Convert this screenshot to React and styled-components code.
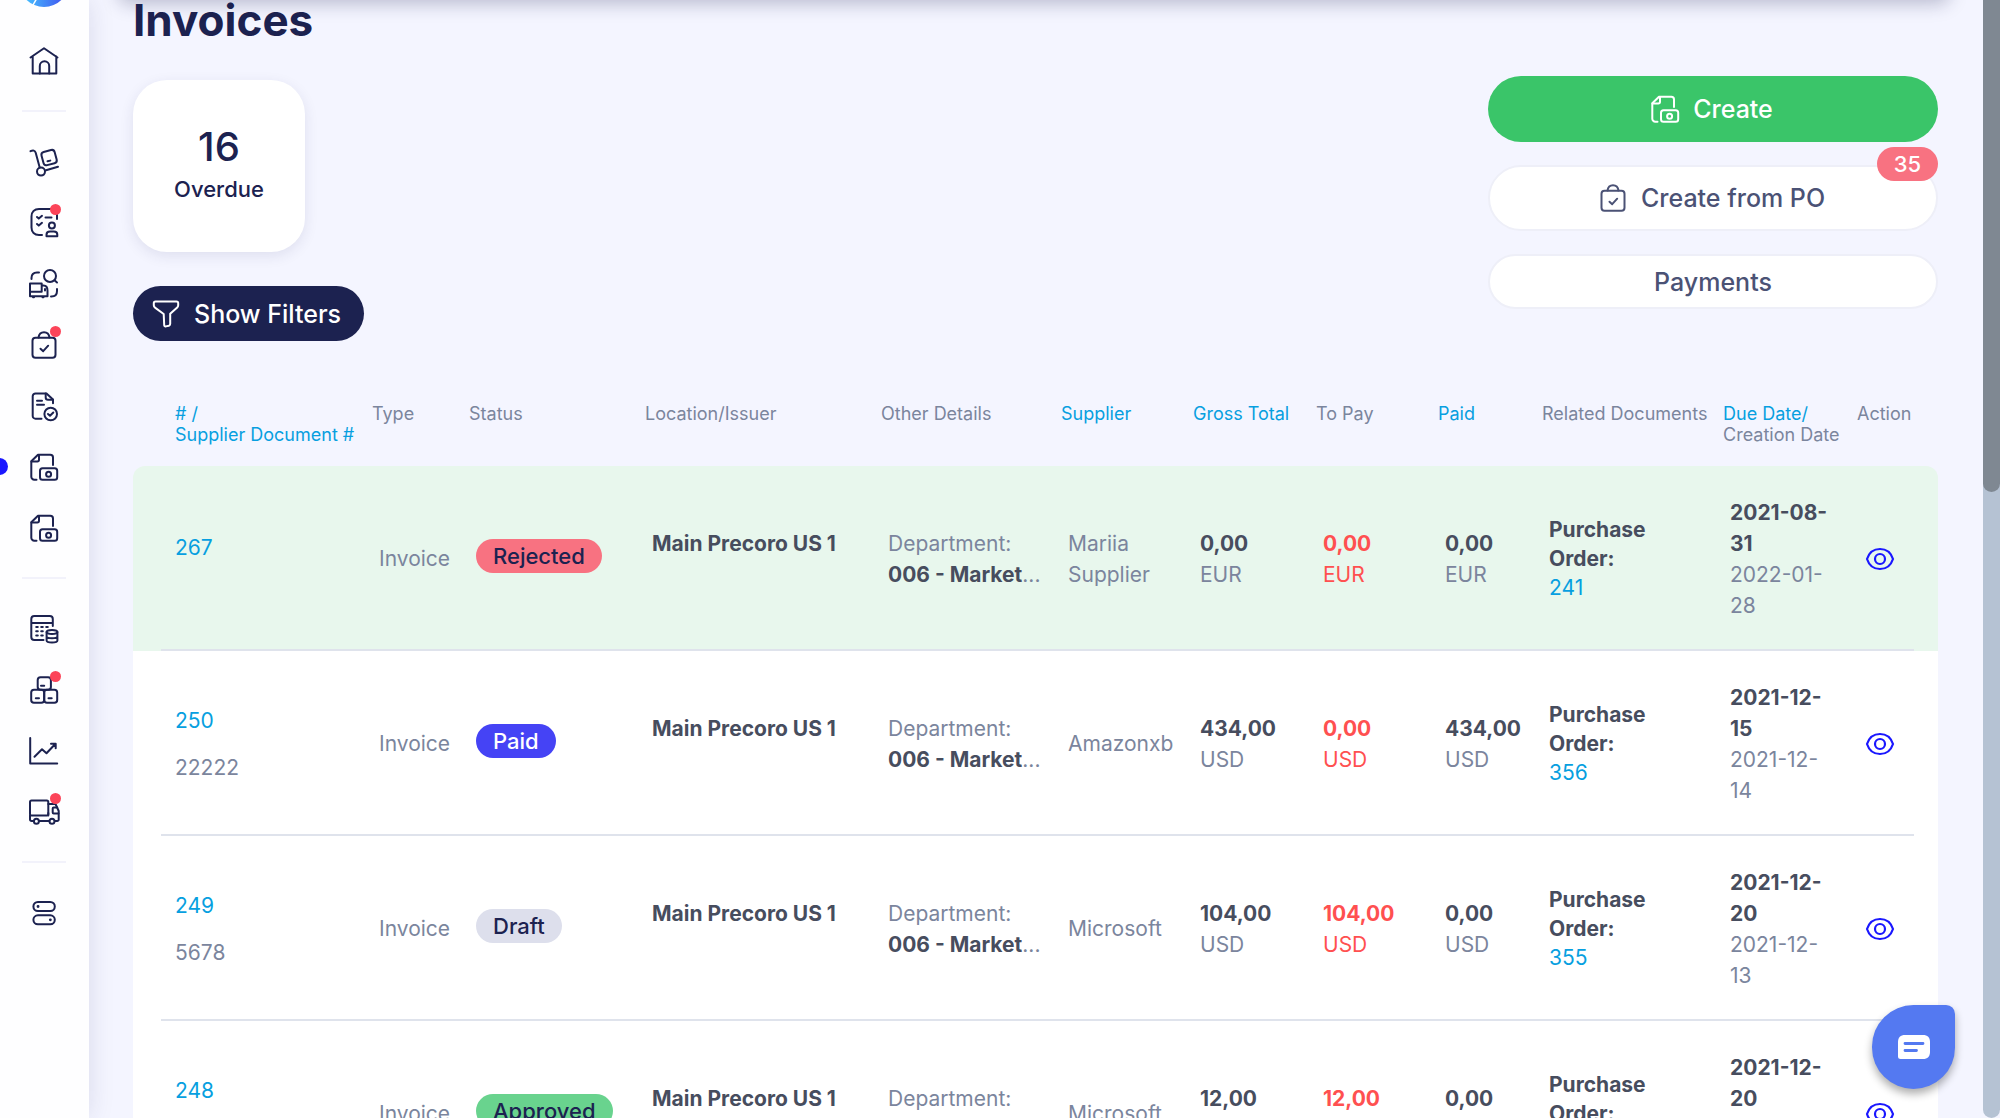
import React from 'react'
import styled, { createGlobalStyle } from 'styled-components'

const colors = {
    ink: '#1c2250',
    slate: '#4b5275',
    text: '#474d5e',
    muted: '#7b859d',
    link: '#079fe0',
    red: '#ff5050',
    page: '#f4f5ff',
    line: '#dfe3ec',
    green: '#3ac569',
    rose: '#f87281'
}

const GlobalStyle = createGlobalStyle`
  * {
    box-sizing: border-box;
  }

  body {
    margin: 0;
    background: ${colors.page};
    color: ${colors.ink};
    font-family: Inter, "Liberation Sans", sans-serif;
  }

  a {
    text-decoration: none;
  }

  button {
    font-family: inherit;
    cursor: pointer;
  }
`

const Shell = styled.div`
  position: relative;
  display: flex;
  height: 100vh;
  overflow: hidden;
`

const Sidebar = styled.nav`
  flex: 0 0 89px;
  display: flex;
  flex-direction: column;
  align-items: center;
  padding-right: 1px;
  background: #fefeff;
  box-shadow: 0 0 24px rgba(40, 40, 100, 0.13);
`

const Logo = styled.a`
  height: 50px;
  margin: -43px 0 23px;
`

const NavLink = styled.a`
  position: relative;
  display: flex;
  align-items: center;
  justify-content: center;
  width: 100%;
  height: 61px;
  color: ${colors.ink};

  &[aria-current='page']::before {
    content: '';
    position: absolute;
    left: -9px;
    width: 17px;
    height: 17px;
    border-radius: 50%;
    background: #1a17ff;
  }
`

const IconHolder = styled.span`
  position: relative;
  display: flex;
`

const AlertDot = styled.span`
  position: absolute;
  top: -3px;
  right: -1px;
  width: 11px;
  height: 11px;
  border-radius: 50%;
  background: #fc4459;
`

const NavDivider = styled.hr`
  width: 44px;
  height: 2px;
  margin: 19px 0;
  border: 0;
  background: #f2f2fb;
`

const TopShade = styled.div`
  position: absolute;
  top: -60px;
  left: 118px;
  right: 50px;
  height: 60px;
  border-radius: 12px;
  box-shadow: 0 4px 18px rgba(28, 34, 80, 0.27);
`

const Main = styled.main`
  flex: 1;
  min-width: 0;
  padding: 0 62px 0 44px;
`

const Title = styled.h1`
  margin: 0;
  font-size: 44px;
  line-height: 40px;
  font-weight: 700;
`

const TopBar = styled.div`
  display: flex;
  justify-content: space-between;
  align-items: flex-start;
  margin-top: 36px;
`

const Summary = styled.div`
  display: flex;
  flex-direction: column;
  align-items: flex-start;
  gap: 34px;
  padding-top: 4px;
`

const StatCard = styled.a`
  display: flex;
  flex-direction: column;
  align-items: center;
  justify-content: center;
  width: 172px;
  height: 172px;
  padding-bottom: 4px;
  border-radius: 34px;
  background: #fff;
  color: ${colors.ink};
  box-shadow: 0 4px 14px rgba(40, 40, 100, 0.1);
`

const StatValue = styled.span`
  font-size: 40px;
  line-height: 50px;
  font-weight: 500;
`

const StatLabel = styled.span`
  font-size: 22px;
  line-height: 34px;
  font-weight: 500;
`

const FilterButton = styled.button`
  display: flex;
  align-items: center;
  gap: 12px;
  height: 55px;
  padding: 0 23px 0 17px;
  border: 0;
  border-radius: 28px;
  background: ${colors.ink};
  color: #fff;
  font-size: 25px;
  font-weight: 500;
`

const Actions = styled.div`
  display: flex;
  flex-direction: column;
  gap: 23px;
  width: 450px;
`

const ActionButton = styled.button`
  position: relative;
  display: flex;
  align-items: center;
  justify-content: center;
  gap: 12px;
  width: 100%;
  height: ${props => (props.$compact ? '55px' : '66px')};
  padding: ${props => (props.$compact ? '0' : '0 4px 0 0')};
  border: ${props => (props.$primary ? '0' : '2px solid #eeeff8')};
  border-radius: 33px;
  background: ${props => (props.$primary ? colors.green : '#fff')};
  color: ${props => (props.$primary ? '#fff' : colors.slate)};
  font-size: 25px;
  font-weight: 500;
`

const CountBadge = styled.span`
  position: absolute;
  top: -20px;
  right: -2px;
  width: 61px;
  border-radius: 17px;
  background: ${colors.rose};
  color: #fff;
  font-size: 22px;
  line-height: 34px;
  text-align: center;
`

const Table = styled.table`
  width: 100%;
  margin-top: 36px;
  table-layout: fixed;
  border-collapse: collapse;
  font-size: 21px;
  line-height: 31px;
  color: ${colors.muted};
`

const HeadCell = styled.th`
  padding: 26px 0 21px;
  font-size: 18px;
  line-height: 21px;
  font-weight: 400;
  text-align: left;
  vertical-align: top;
  white-space: nowrap;

  &:first-child {
    padding-left: 42px;
  }
`

const SortLink = styled.a`
  color: ${colors.link};
`

const Row = styled.tr`
  height: 185px;
  background:
    linear-gradient(${colors.line}, ${colors.line}) 28px 100% / calc(100% - 52px) 2px no-repeat,
    ${props => (props.$highlight ? '#e8f7ed' : '#fff')};
`

const Cell = styled.td`
  padding: 0 22px 0 7px;
  vertical-align: middle;
  color: ${props => (props.$due ? colors.red : 'inherit')};

  &:first-child {
    padding-left: 42px;
  }
`

const Body = styled.tbody`
  clip-path: inset(0 round 12px 12px 0 0);
`

const DocLink = styled.a`
  display: block;
  color: ${colors.link};
`

const DocNumber = styled.div`
  min-height: 23px;
  padding-top: 16px;
`

const Strong = styled.strong`
  font-weight: 700;
  color: ${props => (props.$due ? 'inherit' : colors.text)};
`

const Location = styled.div`
  height: 62px;
  white-space: nowrap;
`

const NoWrap = styled.div`
  white-space: nowrap;
`

const Related = styled.div`
  line-height: 29px;
`

const tones = {
    Rejected: { background: colors.rose, color: colors.ink },
    Paid: { background: '#4543f5', color: '#fff' },
    Draft: { background: '#dddfec', color: colors.ink },
    Approved: { background: '#69d38e', color: colors.ink }
}

const StatusPill = styled.span`
  display: inline-block;
  padding: 0 17px;
  margin-bottom: 6px;
  border-radius: 17px;
  background: ${props => tones[props.$status].background};
  color: ${props => tones[props.$status].color};
  font-size: 22px;
  line-height: 34px;
  font-weight: 500;
  vertical-align: middle;
`

const ViewButton = styled.button`
  display: flex;
  padding: 0;
  border: 0;
  background: none;
  color: #1a17ff;
`

const ChatButton = styled.button`
  position: absolute;
  right: 45px;
  bottom: 29px;
  display: flex;
  align-items: center;
  justify-content: center;
  width: 83px;
  height: 84px;
  padding: 0;
  border: 0;
  border-radius: 42px 9px 42px 42px;
  background: #5479f1;
  box-shadow: 0 5px 8px rgba(0, 0, 0, 0.32);
`

const ScrollTrack = styled.div`
  position: absolute;
  top: 0;
  right: 0;
  bottom: 0;
  width: 17px;
  border-radius: 0 0 9px 9px;
  background: #b5c2d3;
`

const ScrollThumb = styled.div`
  height: 44%;
  border-radius: 0 0 9px 9px;
  background: #7f8892;
`

const Icon = ({ children }) => (
    <svg
        width="32"
        height="32"
        viewBox="0 0 32 32"
        fill="none"
        stroke="currentColor"
        strokeWidth="2"
        strokeLinecap="round"
        strokeLinejoin="round"
        aria-hidden="true"
    >
        {children}
    </svg>
)

const HomeIcon = () => (
    <Icon>
        <path d="M2.5 12.5 16 3.2l13.5 9.300M4.700 11.500v17h23.600v-17" />
        <path d="M11.800 28.500v-7.500a4.700 4.700 0 0 1 9.400 0v7.500" />
    </Icon>
)

const TrolleyIcon = () => (
    <Icon>
        <path d="M2.500 5.200C5 4 7 4.300 7.700 6.800l4 14.700" />
        <circle cx="13" cy="25.600" r="4" />
        <path d="m18 24.300 12-3.500" />
        <rect x="14.300" y="4.800" width="13.600" height="13.600" rx="3" transform="rotate(-15 21.100 11.600)" />
        <path d="m19.500 15.300 2.800-.7" />
    </Icon>
)

const TasksIcon = () => (
    <Icon>
        <path d="M14 28h-3c-4.500 0-7.500-3-7.500-7.500v-11C3.500 5 6.500 2 11 2h11.500C26 2 29 4 29 8v4" />
        <path d="m9 10 1.800 1.600L14 8.800M9 17l1.800 1.600L14 15.800M17.500 10.500h6" />
        <circle cx="23.900" cy="18.500" r="3" />
        <path d="M18.500 29.200v-1.500c0-2 1.500-3.200 3.500-3.200h3.800c2 0 3.500 1.200 3.500 3.200v1.500z" />
    </Icon>
)

const SourcingIcon = () => (
    <Icon>
        <path d="M3.500 11v-1c0-3.500 2-5.500 5.500-5.500h2" />
        <circle cx="22" cy="8" r="6" />
        <path d="m26.500 12.300 2.500 2.200M29 21v2c0 3.500-2 5.500-5.500 5.500H23" />
        <path d="M2 15.500h11.700v8.300H2zM2 23.800v4.500h17.500v-5.500c0-3.500-1.500-5.300-4-5.300h-1.800M17 21v1.500M5 29.300h1M14.500 29.300h1" />
    </Icon>
)

const BagIcon = () => (
    <Icon>
        <rect x="4.500" y="8.800" width="23" height="20" rx="3" />
        <path d="M10.500 8.500C11.500 1.500 20.500 1.500 21.500 8.500M12.500 19.700l2.700 2.500 5-5.500" />
    </Icon>
)

const ReceiptIcon = () => (
    <Icon>
        <path d="M13.500 28.700h-6a2.800 2.800 0 0 1-2.800-2.800V6.200a2.800 2.800 0 0 1 2.800-2.800h11L25 9.500v3.800" />
        <path d="M17.700 3.400v4c0 1.500.8 2.300 2.300 2.300h5M9 10.700h5M9 14.700h7" />
        <circle cx="22.700" cy="24" r="6.300" />
        <path d="m20 24 2 1.800 3.300-3.300" />
    </Icon>
)

const InvoiceIcon = () => (
    <Icon>
        <path d="M8.500 28.700H6.300a3 3 0 0 1-3-3V10.300L10 3.700h12.300A2.700 2.700 0 0 1 25 6.400V14" />
        <path d="M3.500 10.500h5.800A1.700 1.700 0 0 0 11 8.800V3.900" />
        <rect x="12" y="17.300" width="17.200" height="11.500" rx="2.500" />
        <circle cx="20.600" cy="23.200" r="2.500" />
    </Icon>
)

const BudgetIcon = () => (
    <Icon>
        <path d="M15.500 27H6.300a3 3 0 0 1-3-3V6a3 3 0 0 1 3-3h15.500a3 3 0 0 1 3 3v7M3.300 10h21.500" />
        <path d="M8.200 14h1.600M13.200 14h1.600M18.200 14h1.600M8.200 18.300h1.600M13.200 18.300h1.600M8.200 22.600h1.600M13.200 22.600h1.600" />
        <ellipse cx="24" cy="19" rx="5.400" ry="2" />
        <path d="M18.600 19v8.500c0 2.600 10.800 2.600 10.800 0V19M18.600 23.200c0 2.600 10.800 2.600 10.800 0" />
    </Icon>
)

const BoxesIcon = () => (
    <Icon>
        <rect x="9.700" y="3.300" width="13.200" height="12.500" rx="2.800" />
        <rect x="3.200" y="15.800" width="13" height="13" rx="2.800" />
        <rect x="16.200" y="15.800" width="13" height="13" rx="2.800" />
        <path d="M13 11.700h3.200M7.800 24.200H11M20.500 24.200h3.200" />
    </Icon>
)

const ChartIcon = () => (
    <Icon>
        <path d="M2.200 3v25.500h27" />
        <path d="m6.500 21.700 7.500-7.400 4.500 4 9-9.500M23 8.700h4.700v4.500" />
    </Icon>
)

const TruckIcon = () => (
    <Icon>
        <rect x="2" y="4.500" width="18.300" height="15" rx="1.500" />
        <path d="M2 19.500v4A1.500 1.500 0 0 0 3.500 25h2.300M11 25h10.300M26.800 25h2.400a1.500 1.500 0 0 0 1.500-1.500V15L27.500 8h-7.200" />
        <path d="M30.500 17.500h-4.800a1 1 0 0 1-1-1v-4a1 1 0 0 1 1-1h3.500M20.300 19.500V17" />
        <circle cx="8.400" cy="25.200" r="2.500" />
        <circle cx="24" cy="25.200" r="2.500" />
    </Icon>
)

const SettingsIcon = () => (
    <Icon>
        <rect x="5.400" y="5" width="21.400" height="9" rx="4.500" />
        <rect x="5.400" y="18.300" width="21.400" height="9" rx="4.500" />
        <path d="M10 9.500h.1M22.300 22.800h.1" strokeWidth="2.800" />
    </Icon>
)

const FilterIcon = () => (
    <Icon>
        <path d="M5.500 3.500h21c1.200 0 1.700.6 1.700 1.700v2c0 1-.3 1.600-1 2.300l-7 6.300v10c0 1-.4 1.600-1.300 1.900l-3 .7c-1 .2-1.600-.2-1.700-1.200L13.700 16 5 9.600c-.8-.7-1.200-1.400-1.200-2.400v-2c0-1.100.5-1.700 1.700-1.700z" />
    </Icon>
)

const EyeIcon = () => (
    <svg width="32" height="24" viewBox="0 0 32 24" fill="none" stroke="currentColor" strokeWidth="2.200" aria-hidden="true">
        <path d="M3 12C5.200 5.200 10.500 2 16 2s10.800 3.200 13 10c-2.200 6.800-7.500 10-13 10S5.200 18.800 3 12z" strokeLinejoin="round" />
        <circle cx="16" cy="12" r="5" />
    </svg>
)

const ChatIcon = () => (
    <svg width="34" height="26" viewBox="0 0 34 26" aria-hidden="true">
        <path d="M8 1h18c4.500 0 7 2.500 7 7v10c0 4.500-2.500 7-7 7H3.500C2 25 1 24.200 1 22.500V8c0-4.500 2.500-7 7-7z" fill="#fff" />
        <path d="M8 9.500h18M8 16.500h11.500" stroke="#5479f1" strokeWidth="2.800" strokeLinecap="round" />
    </svg>
)

const LogoMark = () => (
    <svg width="50" height="50" viewBox="0 0 50 50" aria-hidden="true">
        <defs>
            <linearGradient id="brand" x1="0" y1="0" x2="1" y2="0">
                <stop offset="0.100" stopColor="#46c3ff" />
                <stop offset="0.900" stopColor="#4055f0" />
            </linearGradient>
        </defs>
        <circle cx="25" cy="25" r="25" fill="url(#brand)" />
        <path d="m14 48 4-7" stroke="#fff" strokeWidth="1.500" />
    </svg>
)

const navGroups = [
    [{ label: 'Home', icon: HomeIcon }],
    [
        { label: 'Warehouse', icon: TrolleyIcon },
        { label: 'Requests', icon: TasksIcon, alert: true },
        { label: 'Sourcing', icon: SourcingIcon },
        { label: 'Purchase orders', icon: BagIcon, alert: true },
        { label: 'Receipts', icon: ReceiptIcon },
        { label: 'Invoices', icon: InvoiceIcon, active: true },
        { label: 'Expenses', icon: InvoiceIcon }
    ],
    [
        { label: 'Budgets', icon: BudgetIcon },
        { label: 'Inventory', icon: BoxesIcon, alert: true },
        { label: 'Reports', icon: ChartIcon },
        { label: 'Suppliers', icon: TruckIcon, alert: true }
    ],
    [{ label: 'Settings', icon: SettingsIcon }]
]

const columns = [
    { width: 239, sort: <># /<br />Supplier Document #</> },
    { width: 97, label: 'Type' },
    { width: 176, label: 'Status' },
    { width: 236, label: 'Location/Issuer' },
    { width: 180, label: 'Other Details' },
    { width: 132, sort: 'Supplier' },
    { width: 123, sort: 'Gross Total' },
    { width: 122, label: 'To Pay' },
    { width: 104, sort: 'Paid' },
    { width: 181, label: 'Related Documents' },
    { width: 134, sort: 'Due Date/', label: <><br />Creation Date</> },
    { width: 81, label: 'Action' }
]

const invoices = [
    {
        id: '267', status: 'Rejected', supplier: 'Mariia Supplier', currency: 'EUR',
        gross: '0,00', toPay: '0,00', paid: '0,00', order: '241', due: '2021-08-31', created: '2022-01-28', highlight: true
    },
    {
        id: '250', doc: '22222', status: 'Paid', supplier: 'Amazonxb', currency: 'USD',
        gross: '434,00', toPay: '0,00', paid: '434,00', order: '356', due: '2021-12-15', created: '2021-12-14'
    },
    {
        id: '249', doc: '5678', status: 'Draft', supplier: 'Microsoft', currency: 'USD',
        gross: '104,00', toPay: '104,00', paid: '0,00', order: '355', due: '2021-12-20', created: '2021-12-13'
    },
    {
        id: '248', doc: '5677', status: 'Approved', supplier: 'Microsoft', currency: 'USD',
        gross: '12,00', toPay: '12,00', paid: '0,00', order: '354', due: '2021-12-20', created: '2021-12-13'
    }
]

const Amount = ({ value, currency, due }) => (
    <Cell $due={due}>
        <NoWrap>
            <Strong $due={due}>{value}</Strong>
            <br />
            {currency}
        </NoWrap>
    </Cell>
)

const InvoiceRow = ({ invoice }) => (
    <Row $highlight={invoice.highlight}>
        <Cell>
            <DocLink href="#">{invoice.id}</DocLink>
            <DocNumber>{invoice.doc}</DocNumber>
        </Cell>
        <Cell><NoWrap>Invoice</NoWrap></Cell>
        <Cell><StatusPill $status={invoice.status}>{invoice.status}</StatusPill></Cell>
        <Cell>
            <Location><Strong>Main Precoro US 1</Strong></Location>
        </Cell>
        <Cell>
            <NoWrap>Department:<br /><Strong>006 - Market</Strong>...</NoWrap>
        </Cell>
        <Cell>{invoice.supplier}</Cell>
        <Amount value={invoice.gross} currency={invoice.currency} />
        <Amount value={invoice.toPay} currency={invoice.currency} due />
        <Amount value={invoice.paid} currency={invoice.currency} />
        <Cell>
            <Related>
                <Strong>Purchase<br />Order:</Strong>
                <DocLink href="#">{invoice.order}</DocLink>
            </Related>
        </Cell>
        <Cell>
            <Strong>{invoice.due}</Strong>
            <br />
            {invoice.created}
        </Cell>
        <Cell>
            <ViewButton aria-label={`View invoice ${invoice.id}`}><EyeIcon /></ViewButton>
        </Cell>
    </Row>
)

const InvoicesPage = () => {
    return (
        <Shell>
            <Sidebar aria-label="Main">
                <Logo href="#" aria-label="Precoro"><LogoMark /></Logo>
                {navGroups.map((group, index) => (
                    <React.Fragment key={index}>
                        {index > 0 && <NavDivider />}
                        {group.map(item => (
                            <NavLink
                                key={item.label}
                                href="#"
                                aria-label={item.label}
                                aria-current={item.active ? 'page' : undefined}
                            >
                                <IconHolder>
                                    <item.icon />
                                    {item.alert && <AlertDot />}
                                </IconHolder>
                            </NavLink>
                        ))}
                    </React.Fragment>
                ))}
            </Sidebar>

            <Main>
                <Title>Invoices</Title>
                <TopBar>
                    <Summary>
                        <StatCard href="#">
                            <StatValue>16</StatValue>
                            <StatLabel>Overdue</StatLabel>
                        </StatCard>
                        <FilterButton><FilterIcon /> Show Filters</FilterButton>
                    </Summary>
                    <Actions>
                        <ActionButton $primary><InvoiceIcon /> Create</ActionButton>
                        <ActionButton>
                            <BagIcon /> Create from PO
                            <CountBadge>35</CountBadge>
                        </ActionButton>
                        <ActionButton $compact>Payments</ActionButton>
                    </Actions>
                </TopBar>

                <Table>
                    <colgroup>
                        {columns.map((column, index) => (
                            <col key={index} width={column.width} />
                        ))}
                    </colgroup>
                    <thead>
                        <tr>
                            {columns.map((column, index) => (
                                <HeadCell key={index} scope="col">
                                    {column.sort && <SortLink href="#">{column.sort}</SortLink>}
                                    {column.label}
                                </HeadCell>
                            ))}
                        </tr>
                    </thead>
                    <Body>
                        {invoices.map(invoice => (
                            <InvoiceRow key={invoice.id} invoice={invoice} />
                        ))}
                    </Body>
                </Table>
            </Main>

            <TopShade />
            <ScrollTrack><ScrollThumb /></ScrollTrack>
            <ChatButton aria-label="Open chat"><ChatIcon /></ChatButton>
        </Shell>
    )
}

const App = () => (
    <>
        <GlobalStyle />
        <InvoicesPage />
    </>
)

export default App
